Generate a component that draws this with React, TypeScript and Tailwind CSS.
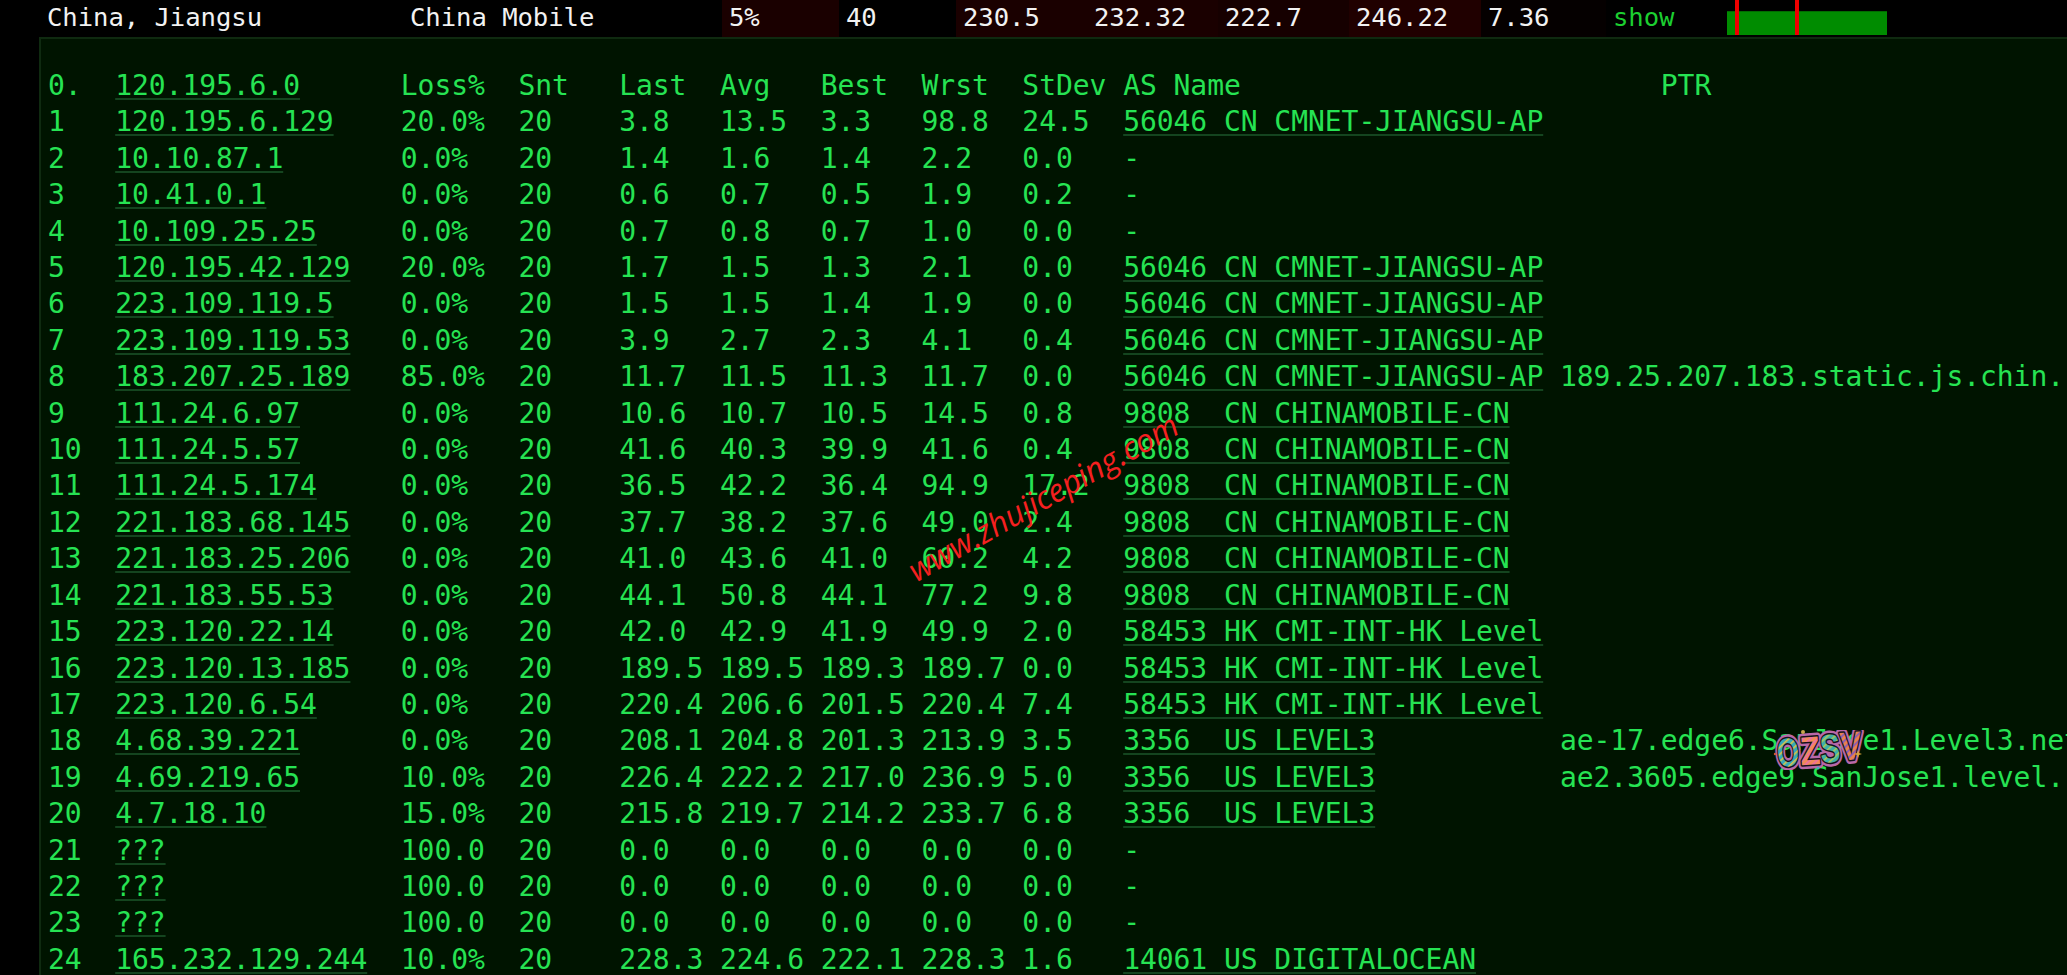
const ROWS = [
  ['1', '120.195.6.129', '20.0%', '20', '3.8', '13.5', '3.3', '98.8', '24.5', '56046 CN CMNET-JIANGSU-AP', ''],
  ['2', '10.10.87.1', '0.0%', '20', '1.4', '1.6', '1.4', '2.2', '0.0', '-', ''],
  ['3', '10.41.0.1', '0.0%', '20', '0.6', '0.7', '0.5', '1.9', '0.2', '-', ''],
  ['4', '10.109.25.25', '0.0%', '20', '0.7', '0.8', '0.7', '1.0', '0.0', '-', ''],
  ['5', '120.195.42.129', '20.0%', '20', '1.7', '1.5', '1.3', '2.1', '0.0', '56046 CN CMNET-JIANGSU-AP', ''],
  ['6', '223.109.119.5', '0.0%', '20', '1.5', '1.5', '1.4', '1.9', '0.0', '56046 CN CMNET-JIANGSU-AP', ''],
  ['7', '223.109.119.53', '0.0%', '20', '3.9', '2.7', '2.3', '4.1', '0.4', '56046 CN CMNET-JIANGSU-AP', ''],
  ['8', '183.207.25.189', '85.0%', '20', '11.7', '11.5', '11.3', '11.7', '0.0', '56046 CN CMNET-JIANGSU-AP', '189.25.207.183.static.js.chin.'],
  ['9', '111.24.6.97', '0.0%', '20', '10.6', '10.7', '10.5', '14.5', '0.8', '9808  CN CHINAMOBILE-CN', ''],
  ['10', '111.24.5.57', '0.0%', '20', '41.6', '40.3', '39.9', '41.6', '0.4', '9808  CN CHINAMOBILE-CN', ''],
  ['11', '111.24.5.174', '0.0%', '20', '36.5', '42.2', '36.4', '94.9', '17.2', '9808  CN CHINAMOBILE-CN', ''],
  ['12', '221.183.68.145', '0.0%', '20', '37.7', '38.2', '37.6', '49.0', '2.4', '9808  CN CHINAMOBILE-CN', ''],
  ['13', '221.183.25.206', '0.0%', '20', '41.0', '43.6', '41.0', '60.2', '4.2', '9808  CN CHINAMOBILE-CN', ''],
  ['14', '221.183.55.53', '0.0%', '20', '44.1', '50.8', '44.1', '77.2', '9.8', '9808  CN CHINAMOBILE-CN', ''],
  ['15', '223.120.22.14', '0.0%', '20', '42.0', '42.9', '41.9', '49.9', '2.0', '58453 HK CMI-INT-HK Level', ''],
  ['16', '223.120.13.185', '0.0%', '20', '189.5', '189.5', '189.3', '189.7', '0.0', '58453 HK CMI-INT-HK Level', ''],
  ['17', '223.120.6.54', '0.0%', '20', '220.4', '206.6', '201.5', '220.4', '7.4', '58453 HK CMI-INT-HK Level', ''],
  ['18', '4.68.39.221', '0.0%', '20', '208.1', '204.8', '201.3', '213.9', '3.5', '3356  US LEVEL3', 'ae-17.edge6.SanJose1.Level3.net'],
  ['19', '4.69.219.65', '10.0%', '20', '226.4', '222.2', '217.0', '236.9', '5.0', '3356  US LEVEL3', 'ae2.3605.edge9.SanJose1.level.'],
  ['20', '4.7.18.10', '15.0%', '20', '215.8', '219.7', '214.2', '233.7', '6.8', '3356  US LEVEL3', ''],
  ['21', '???', '100.0', '20', '0.0', '0.0', '0.0', '0.0', '0.0', '-', ''],
  ['22', '???', '100.0', '20', '0.0', '0.0', '0.0', '0.0', '0.0', '-', ''],
  ['23', '???', '100.0', '20', '0.0', '0.0', '0.0', '0.0', '0.0', '-', ''],
  ['24', '165.232.129.244', '10.0%', '20', '228.3', '224.6', '222.1', '228.3', '1.6', '14061 US DIGITALOCEAN', ''],
]

const TOP_CELLS = [
  { text: '5%', cls: 'w-[117px] bg-[#1a0000]' },
  { text: '40', cls: 'w-[117px] bg-black' },
  { text: '230.5', cls: 'w-[131px] bg-[#1a0000]' },
  { text: '232.32', cls: 'w-[131px] bg-[#1a0000]' },
  { text: '222.7', cls: 'w-[131px] bg-[#160000]' },
  { text: '246.22', cls: 'w-[132px] bg-[#200000]' },
  { text: '7.36', cls: 'w-[125px] bg-[#050000]' },
]

const ROW_CLS = 'grid grid-cols-[67.2px_285.6px_117.6px_100.8px_100.8px_100.8px_100.8px_100.8px_100.8px_436.8px_1fr] whitespace-pre'
const LINK_CLS = 'underline decoration-2 decoration-[#14451f] underline-offset-[3px] [text-decoration-skip-ink:none]'

function Badge() {
  return (
    <svg width="92" height="40" viewBox="0 0 92 40" className="absolute left-[1773px] top-[730px]">
      <defs>
        <pattern id="stripeA" width="5" height="5" patternUnits="userSpaceOnUse" patternTransform="rotate(-40)">
          <rect width="5" height="5" fill="#35a9b8" />
          <rect width="5" height="1.6" fill="#d9c24a" />
        </pattern>
        <pattern id="stripeB" width="5" height="5" patternUnits="userSpaceOnUse" patternTransform="rotate(-40)">
          <rect width="5" height="5" fill="#f08a5a" />
          <rect width="5" height="1.8" fill="#ec6fa0" />
        </pattern>
        <pattern id="stripeC" width="5" height="5" patternUnits="userSpaceOnUse" patternTransform="rotate(-40)">
          <rect width="5" height="5" fill="#3fb0a8" />
          <rect width="5" height="1.6" fill="#a9c85a" />
        </pattern>
        <pattern id="stripeD" width="5" height="5" patternUnits="userSpaceOnUse" patternTransform="rotate(-40)">
          <rect width="5" height="5" fill="#e88050" />
          <rect width="5" height="1.8" fill="#8a5ab8" />
        </pattern>
      </defs>
      <g fontFamily="'Liberation Sans', sans-serif" fontWeight="700" fontSize="40" transform="rotate(-4 46 20)" strokeLinejoin="round" style={{ paintOrder: 'stroke' }}>
        <g fill="#b868a8" stroke="#b868a8" strokeWidth="8">
          <text x="4" y="34" textLength="22" lengthAdjust="spacingAndGlyphs">O</text>
          <text x="27" y="34" textLength="20" lengthAdjust="spacingAndGlyphs">Z</text>
          <text x="47" y="33" textLength="20" lengthAdjust="spacingAndGlyphs">S</text>
          <text x="67" y="32" textLength="22" lengthAdjust="spacingAndGlyphs">V</text>
        </g>
        <g stroke="#15121a" strokeWidth="3">
          <text x="4" y="34" textLength="22" lengthAdjust="spacingAndGlyphs" fill="url(#stripeA)">O</text>
          <text x="27" y="34" textLength="20" lengthAdjust="spacingAndGlyphs" fill="url(#stripeB)">Z</text>
          <text x="47" y="33" textLength="20" lengthAdjust="spacingAndGlyphs" fill="url(#stripeC)">S</text>
          <text x="67" y="32" textLength="22" lengthAdjust="spacingAndGlyphs" fill="url(#stripeD)">V</text>
        </g>
      </g>
      <circle cx="30" cy="2" r="2" fill="#c9a54a" />
      <circle cx="45" cy="38" r="1.5" fill="#4aa8c0" />
      <circle cx="2" cy="24" r="1.2" fill="#d05a3a" />
      <path d="M85 20l1 3 3 1-3 1-1 3-1-3-3-1 3-1z" fill="#d9a53a" />
    </svg>
  )
}

export default function App() {
  return (
    <div className="relative h-[975px] w-[2067px] overflow-hidden bg-black font-['DejaVu_Sans_Mono',monospace]">
      {/* summary row */}
      <div className="flex h-[37px] items-start text-[25.6px] leading-[35px] tracking-[-0.05px] text-[#f2f2f2]">
        <div className="w-[410px] whitespace-pre pl-[47px]">China, Jiangsu</div>
        <div className="w-[312px] whitespace-pre">China Mobile</div>
        {TOP_CELLS.map((cell) => (
          <div key={cell.text} className={`h-[37px] pl-[7px] ${cell.cls}`}>
            {cell.text}
          </div>
        ))}
        <div className="w-[121px] pl-[7px] text-[#1ccf30]">show</div>
        <div className="relative mt-[11px] h-[24px] w-[160px] border-t border-[#006c00] bg-[#008c00]">
          <div className="absolute left-[8px] top-[-12px] h-[35px] w-[4px] bg-[#f00000]" />
          <div className="absolute left-[68px] top-[-12px] h-[35px] w-[4px] bg-[#f00000]" />
        </div>
      </div>

      {/* trace output */}
      <div className="ml-[39px] h-[938px] overflow-hidden border-l-2 border-t-2 border-[#0f2a10] bg-[#001400] pl-[7px] pt-[29px] text-[28px] leading-[36.4px] tracking-[-0.056px] text-[#26e353]">
        <div className={ROW_CLS}>
          <span>0.</span>
          <span><span className={LINK_CLS}>120.195.6.0</span></span>
          <span>Loss%</span>
          <span>Snt</span>
          <span>Last</span>
          <span>Avg</span>
          <span>Best</span>
          <span>Wrst</span>
          <span>StDev</span>
          <span>{'AS Name'.padEnd(32)}PTR</span>
          <span />
        </div>
        {ROWS.map((r) => (
          <div key={r[0]} className={ROW_CLS}>
            <span>{r[0]}</span>
            <span><span className={LINK_CLS}>{r[1]}</span></span>
            <span>{r[2]}</span>
            <span>{r[3]}</span>
            <span>{r[4]}</span>
            <span>{r[5]}</span>
            <span>{r[6]}</span>
            <span>{r[7]}</span>
            <span>{r[8]}</span>
            <span>{r[9] === '-' ? '-' : <span className={LINK_CLS}>{r[9]}</span>}</span>
            <span>{r[10]}</span>
          </div>
        ))}
      </div>

      {/* watermarks */}
      <div className="absolute left-[1043px] top-[497px] -translate-x-1/2 -translate-y-1/2 -rotate-[29.5deg] whitespace-pre font-['Open_Sans',sans-serif] text-[32px] font-medium italic leading-none text-[#f52020]">
        www.zhujiceping.com
      </div>
      <Badge />
    </div>
  )
}
